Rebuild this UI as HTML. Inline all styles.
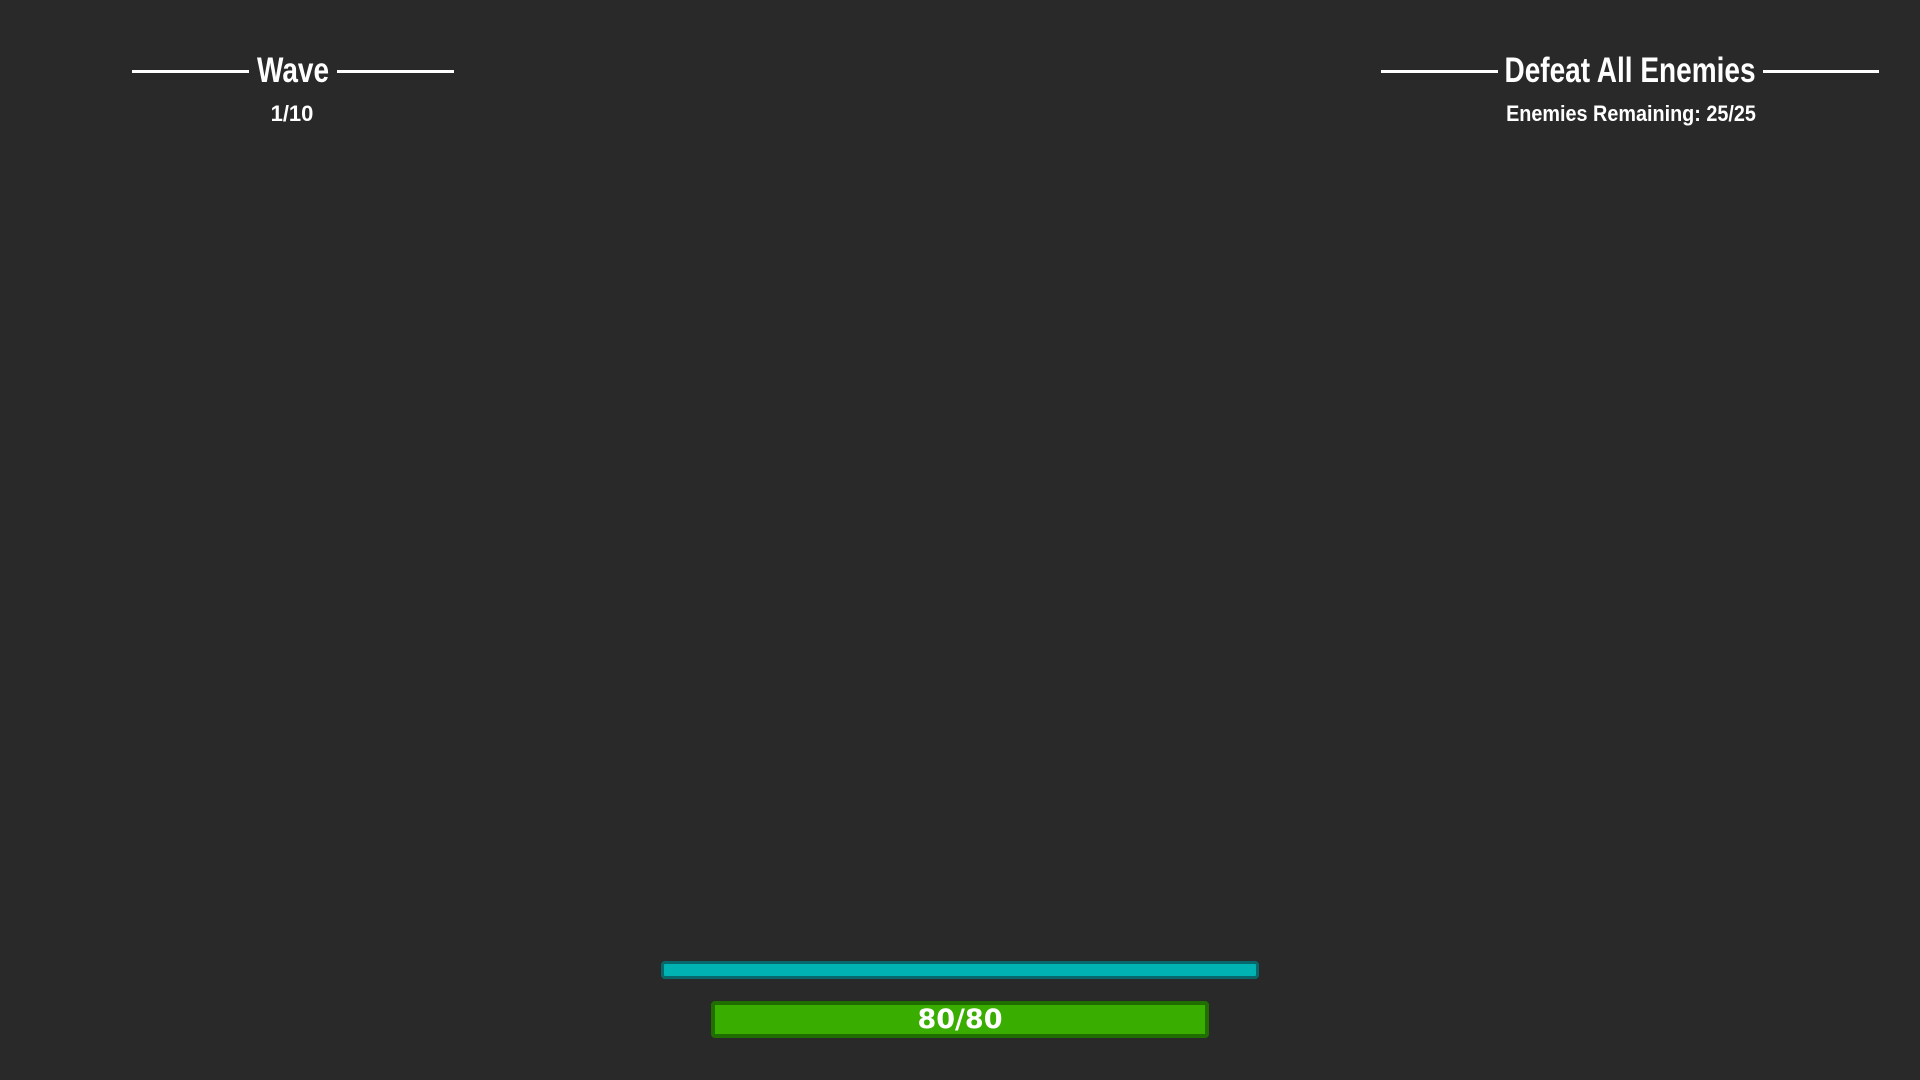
<!DOCTYPE html>
<html><head><meta charset="utf-8"><style>
html,body{margin:0;padding:0;width:1920px;height:1080px;background:#292929;overflow:hidden;font-family:"Liberation Sans",sans-serif;color:#fff}
.line{position:absolute;height:3px;background:#fff;top:70px}
.t{position:absolute;white-space:nowrap;font-weight:bold;transform:translateX(-50%) scaleX(0.8);transform-origin:center}
</style></head><body>
<div class="line" style="left:132px;width:117px"></div>
<div class="line" style="left:337px;width:117px"></div>
<div class="t" style="left:293px;top:51px;font-size:35px;line-height:40px">Wave</div>
<div class="t" style="left:292px;top:101px;font-size:22px;line-height:26px;transform:translateX(-50%)">1/10</div>

<div class="line" style="left:1381px;width:117px"></div>
<div class="line" style="left:1763px;width:116px"></div>
<div class="t" style="left:1630px;top:51px;font-size:35px;line-height:40px">Defeat All Enemies</div>
<div class="t" style="left:1631px;top:101px;font-size:22px;line-height:26px;transform:translateX(-50%) scaleX(0.9)">Enemies Remaining: 25/25</div>

<div style="position:absolute;left:661px;top:961px;width:592px;height:12px;background:#00b2b2;border:3px solid #07676a;border-radius:4px"></div>
<div style="position:absolute;left:711px;top:1001px;width:490px;height:29px;background:#39ae00;border:4px solid #216e00;border-radius:4px;text-align:center;font-family:'DejaVu Sans',sans-serif;font-weight:bold;font-size:27px;line-height:30px">80/80</div>
</body></html>
